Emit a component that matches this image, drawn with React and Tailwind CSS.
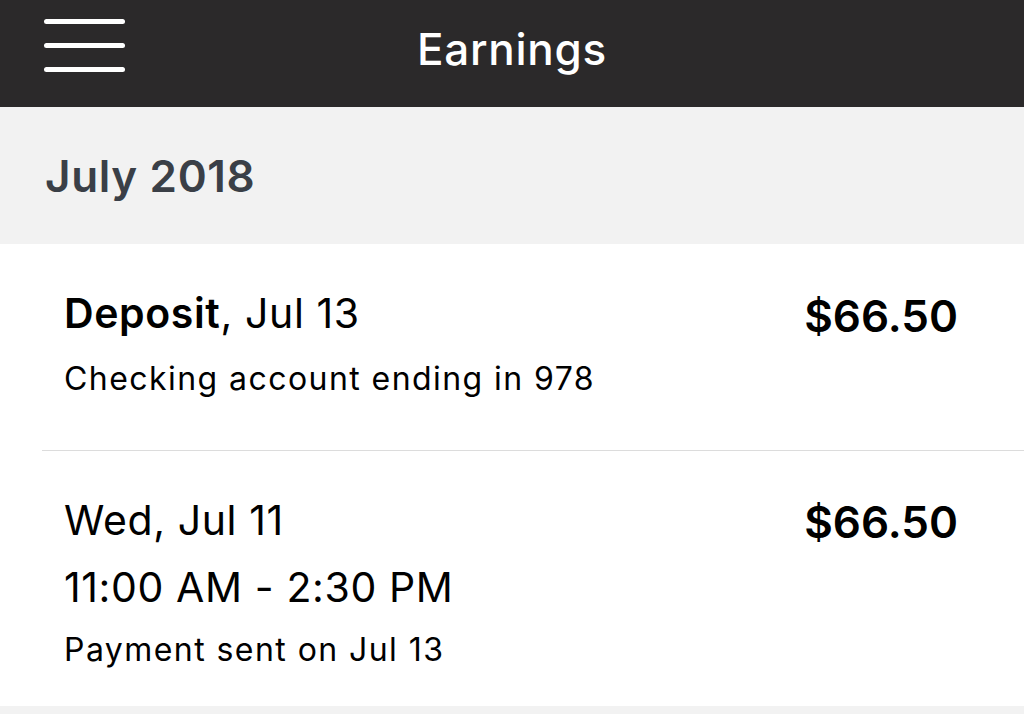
import React from "react";

const rows = [
  {
    id: 1,
    amount: "$66.50",
    lines: [
      { text: <><span className="font-semibold">Deposit</span>, Jul 13</>, cls: "text-[41px] leading-[48px] tracking-[0.015em]" },
      { text: "Checking account ending in 978", cls: "text-[32px] leading-[38px] tracking-[0.045em] mt-[23px]" },
    ],
  },
  {
    id: 2,
    amount: "$66.50",
    lines: [
      { text: "Wed, Jul 11", cls: "text-[41px] leading-[48px] tracking-[0.015em]" },
      { text: "11:00 AM - 2:30 PM", cls: "text-[41px] leading-[48px] tracking-[0.015em] mt-[19px]" },
      { text: "Payment sent on Jul 13", cls: "text-[32px] leading-[38px] tracking-[0.045em] mt-[20px]" },
    ],
  },
];

const App = () => {
  return (
    <div
      className="w-[1024px] h-[714px] overflow-hidden bg-[#f2f2f2] text-black"
      style={{ fontFamily: "Inter, 'Noto Sans', sans-serif" }}
    >
      <header className="h-[107px] bg-[#2b292a] flex items-center relative">
        <div className="absolute left-[44px] top-[19px] flex flex-col gap-[19px]">
          <span className="block w-[81px] h-[5px] rounded-full bg-white" />
          <span className="block w-[81px] h-[5px] rounded-full bg-white" />
          <span className="block w-[81px] h-[5px] rounded-full bg-white" />
        </div>
        <h1 className="w-full text-center text-white text-[44px] font-medium tracking-[0.017em] leading-none pb-[10px]">
          Earnings
        </h1>
      </header>

      <div className="h-[137px] flex items-center pl-[45px]">
        <h2 className="text-[44px] font-semibold tracking-[0.015em] text-[#3a3f47] leading-none">July 2018</h2>
      </div>

      <div className="bg-white">
        {rows.map((row, i) => (
          <React.Fragment key={row.id}>
            {i > 0 && <div className="ml-[42px] h-px bg-[#dcdcdc]" />}
            <div
              className={
                i === 0
                  ? "h-[206px] pt-[45px] pl-[64px] pr-[66px] flex justify-between"
                  : "h-[255px] pt-[45px] pl-[64px] pr-[66px] flex justify-between"
              }
            >
              <div className="flex flex-col">
                {row.lines.map((l, j) => (
                  <div key={j} className={l.cls}>
                    {l.text}
                  </div>
                ))}
              </div>
              <div className={i === 0 ? "text-[44px] font-semibold leading-[48px] mt-[3px]" : "text-[44px] font-semibold leading-[48px] mt-[2px]"}>
                {row.amount}
              </div>
            </div>
          </React.Fragment>
        ))}
      </div>
    </div>
  );
};

export default App;
